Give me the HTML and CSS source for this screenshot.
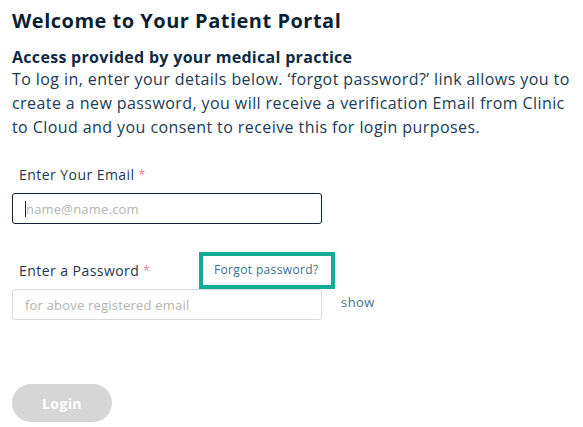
FILE: index.html
```html
<!DOCTYPE html>
<html lang="en">
<head>
<meta charset="utf-8">
<title>Patient Portal</title>
<link rel="stylesheet" href="styles.css">
</head>
<body>
<main class="portal">
  <h1 class="title">Welcome to Your Patient Portal</h1>
  <h2 class="subtitle">Access provided by your medical practice</h2>
  <p class="intro">To log in, enter your details below. ‘forgot password?’ link allows you to create a new password, you will receive a verification Email from Clinic to Cloud and you consent to receive this for login purposes.</p>

  <form class="form">
    <div class="field field-email">
      <label class="label">Enter Your Email<span class="req">*</span></label>
      <div class="input focused"><span class="caret"></span><span class="ph">name@name.com</span></div>
    </div>

    <div class="field field-password">
      <div class="label-row">
        <label class="label">Enter a Password<span class="req">*</span></label>
        <a class="forgot">Forgot password?</a>
      </div>
      <div class="input-row">
        <div class="input"><span class="ph">for above registered email</span></div>
        <span class="show">show</span>
      </div>
    </div>

    <button class="login" type="button">Login</button>
  </form>
</main>
</body>
</html>
```
FILE: styles.css
```css
* { box-sizing: border-box; }
html, body { margin: 0; background: #fff; }
body {
  font-family: "Open Sans", "DejaVu Sans", sans-serif;
  color: #1c3550;
  letter-spacing: 0.45px;
}
.portal { padding: 8px 4px 0 12px; }
.title {
  margin: 0;
  font-size: 20px;
  line-height: 26px;
  font-weight: 700;
  color: #0d1f33;
  letter-spacing: 0.5px;
}
.subtitle {
  margin: 13px 0 0 0;
  font-size: 16px;
  line-height: 20px;
  font-weight: 700;
  color: #0f2a45;
  letter-spacing: 0.3px;
}
.intro {
  margin: 0;
  font-size: 16px;
  line-height: 24px;
  color: #213a55;
  letter-spacing: 0.42px;
}
.form { margin-top: 24px; }
.label {
  display: inline-block;
  padding-left: 7px;
  font-size: 14px;
  line-height: 18px;
  color: #1f3550;
}
.req { color: #f07a8e; margin-left: 4px; font-size: 12px; vertical-align: 1px; }
.input {
  width: 310px;
  height: 31px;
  border: 1px solid #dadada;
  border-radius: 3px;
  display: flex;
  align-items: center;
  padding-left: 12px;
  font-size: 13px;
  letter-spacing: 0.2px;
}
.input.focused { border-color: #0f2236; margin-top: 8px; }
.caret { width: 1px; height: 16px; background: #222; margin-right: 0; }
.ph { color: #b3b3b3; }
.field-password { margin-top: 28px; }
.label-row { display: flex; align-items: center; }
.label-row .label { width: 187px; }
.forgot {
  display: block;
  border: 4px solid #16ab94;
  padding: 5px 13px 6px 11px;
  font-size: 12px;
  line-height: 18px;
  color: #3b6f8e;
  text-decoration: none;
  letter-spacing: 0.35px;
}
.input-row { display: flex; align-items: center; }
.show { margin-left: 19px; font-size: 13px; color: #4a6f85; margin-top: -6px; }
.login {
  margin-top: 64px;
  width: 100px;
  height: 38px;
  border: none;
  border-radius: 19px;
  background: #d6d6d6;
  color: #fff;
  font-family: inherit;
  font-weight: 700;
  font-size: 14px;
  letter-spacing: 0.4px;
}
```
